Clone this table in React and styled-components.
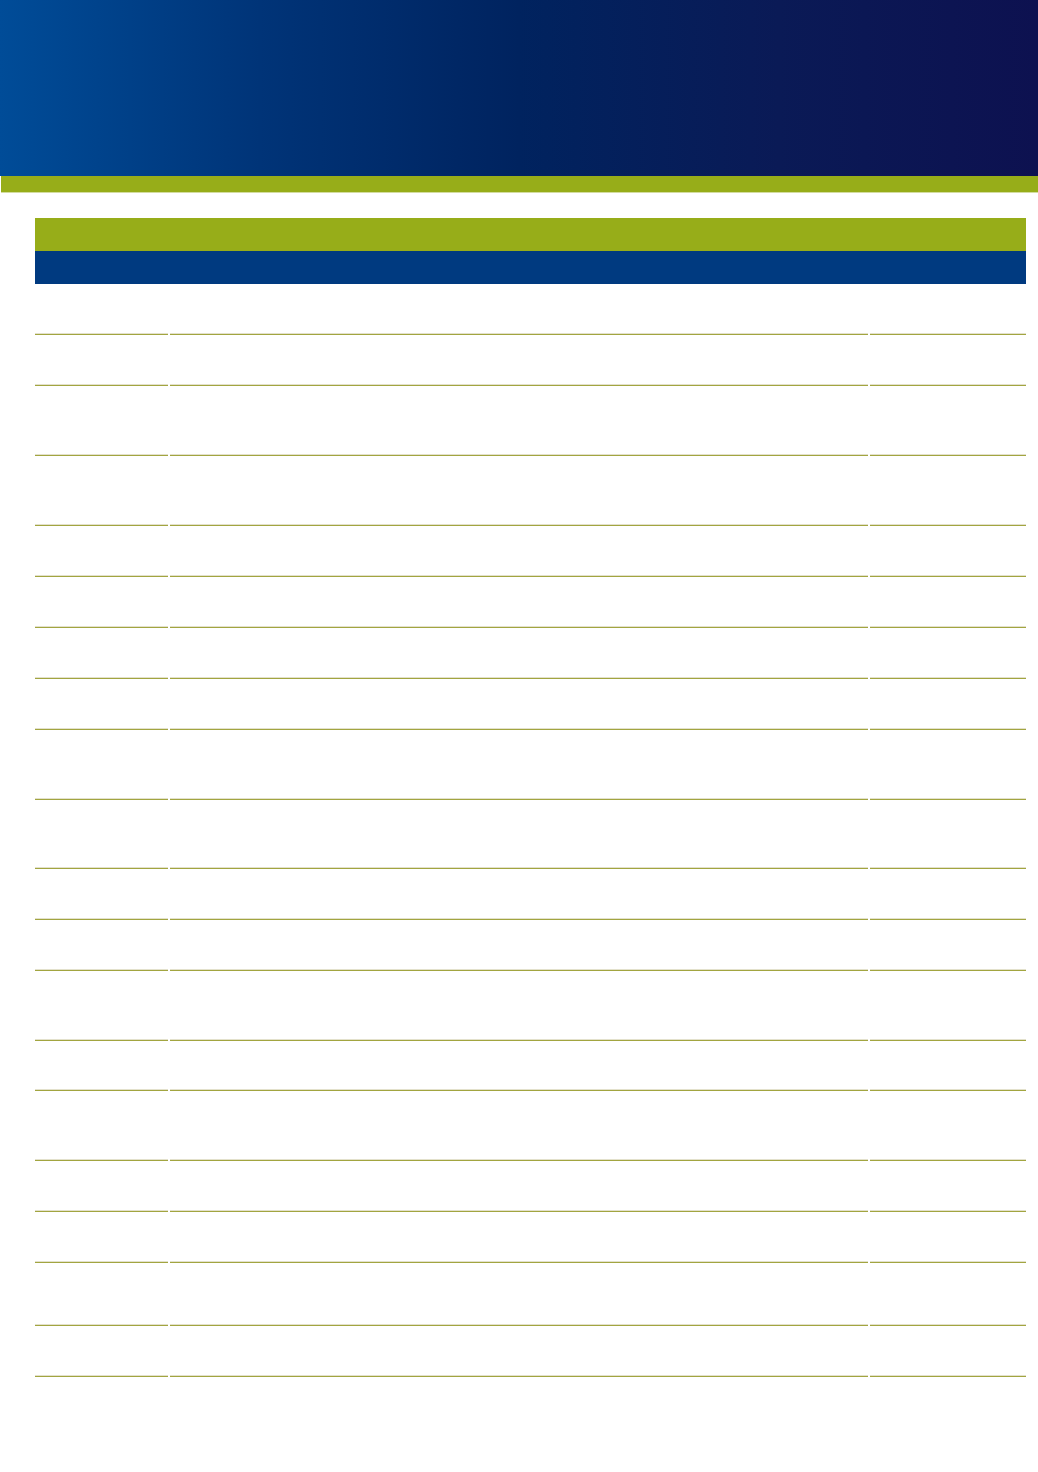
import styled, { createGlobalStyle } from "styled-components";

const GlobalStyle = createGlobalStyle`
  body {
    margin: 0;
    background: #ffffff;
    font-family: "Liberation Sans", Arial, sans-serif;
  }
`;

const Page = styled.div`
  width: 1038px;
  min-height: 1472px;
  background: #ffffff;
`;

const Banner = styled.header`
  height: 176px;
  background: linear-gradient(90deg, #004c98 0%, #003478 25%, #00235f 50%, #0a1a56 75%, #0d1150 100%);
`;

const Stripe = styled.div`
  height: 16px;
  margin-left: 1px;
  background: #97ad19;
  box-shadow: 0 1px 0 #d3dca0;
`;

const Table = styled.div`
  margin: 26px 12px 0 35px;
  width: 991px;
`;

const Bar = styled.div`
  height: 33px;
  background: ${(p) => p.color};
`;

const Row = styled.div`
  display: grid;
  grid-template-columns: 133px 698px 156px;
  column-gap: 2px;
  height: ${(p) => p.h}px;
`;

const Cell = styled.div`
  border-bottom: 1px solid #a2a540;
  box-shadow: inset 0 -1px 0 #e3e1cc;
`;

const rows = [51, 51, 70, 70, 51, 51, 51, 51, 70, 69, 51, 51, 70, 50, 70, 51, 51, 63, 51];

export default function App() {
  return (
    <Page>
      <GlobalStyle />
      <Banner />
      <Stripe />
      <Table>
        <Bar color="#97ad19" />
        <Bar color="#003a80" />
        {rows.map((h, i) => (
          <Row key={i} h={h}>
            <Cell />
            <Cell />
            <Cell />
          </Row>
        ))}
      </Table>
    </Page>
  );
}
